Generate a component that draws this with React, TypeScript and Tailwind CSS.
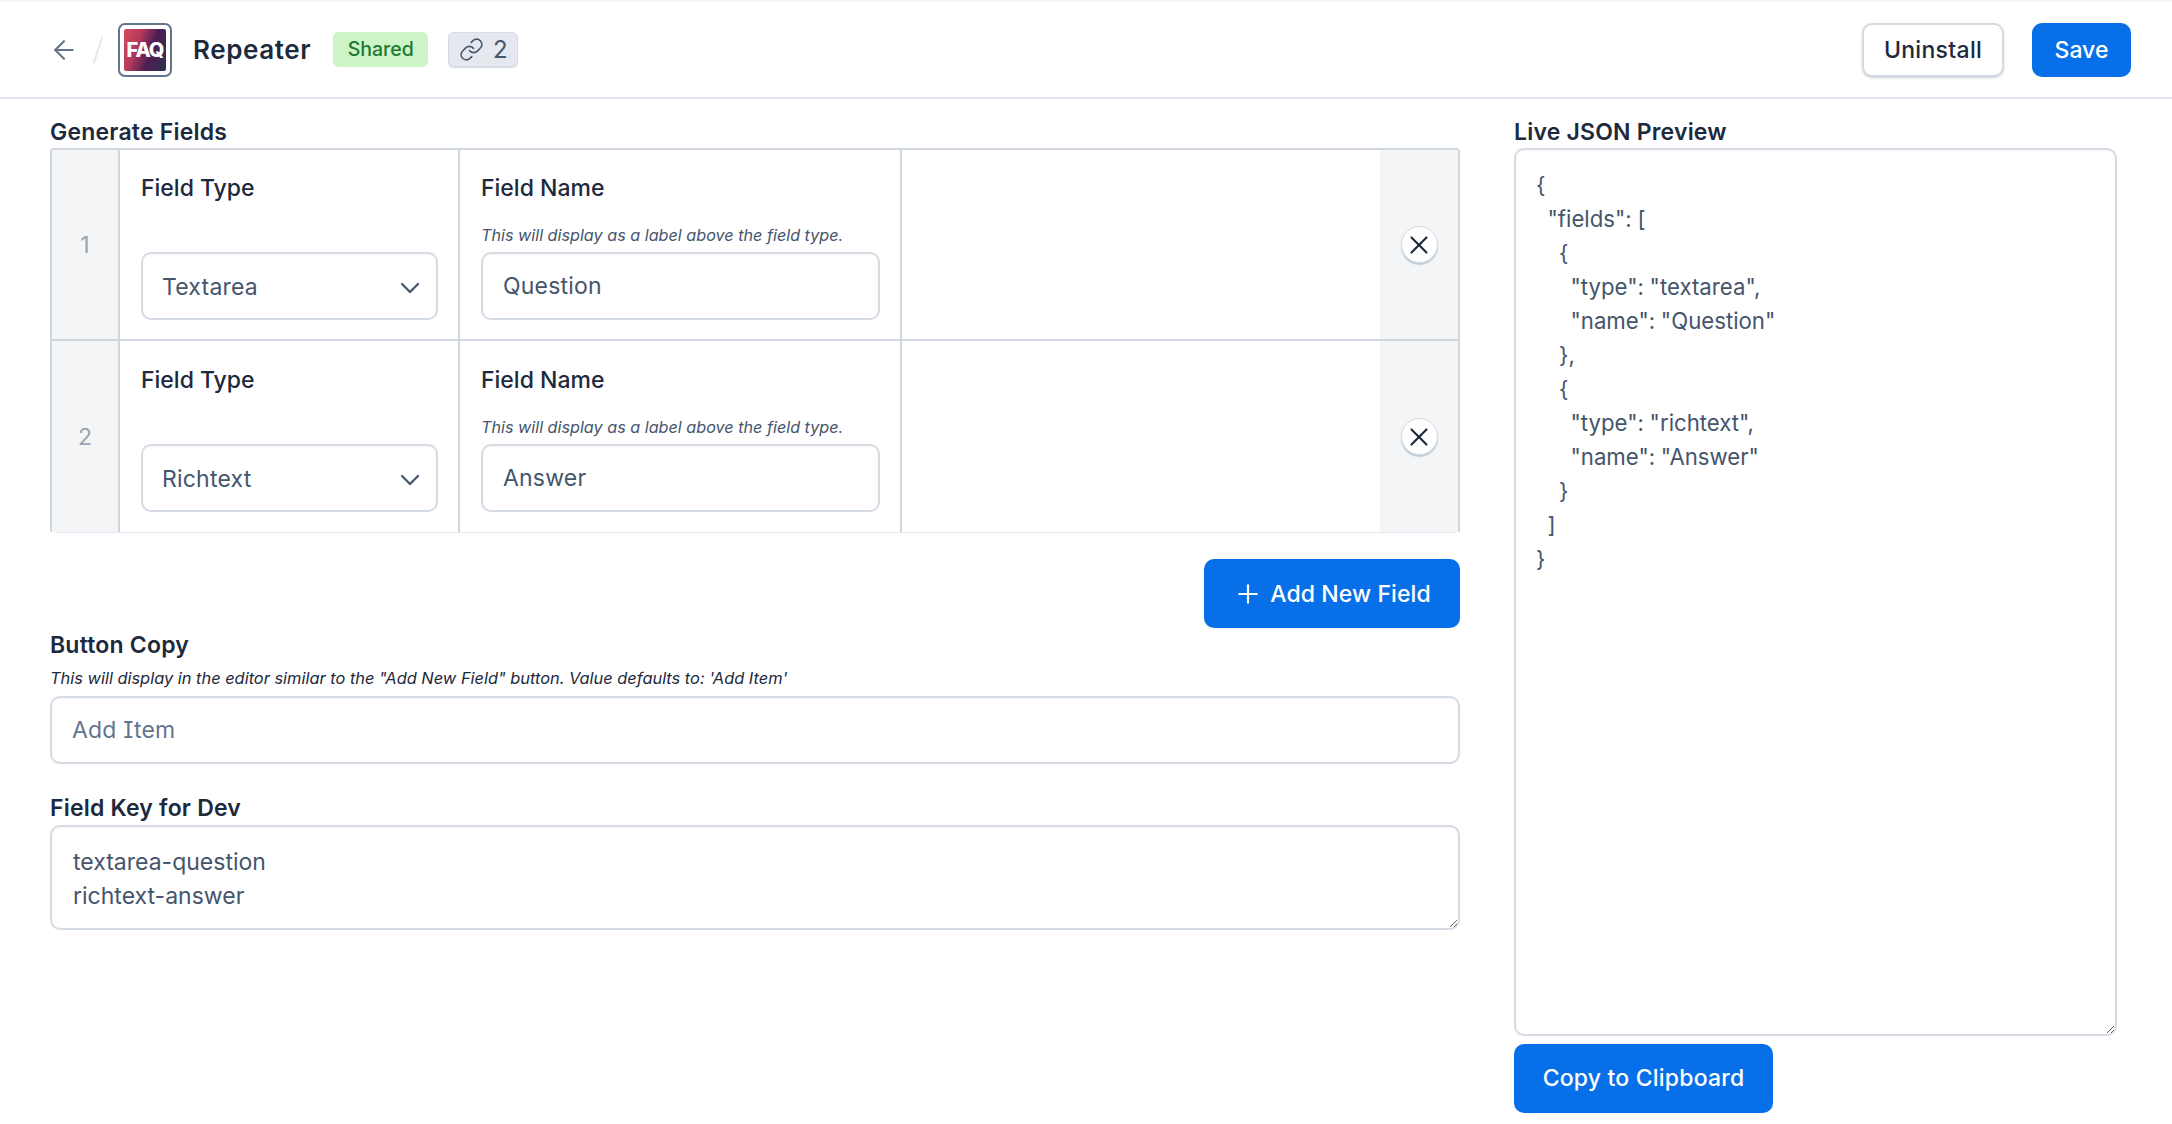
import React from 'react'
import { ArrowLeft, ChevronDown, Link, Plus, X } from 'lucide-react'

const rows = [
  { num: 1, type: 'Textarea', name: 'Question' },
  { num: 2, type: 'Richtext', name: 'Answer' },
]

const json = `{
  "fields": [
    {
      "type": "textarea",
      "name": "Question"
    },
    {
      "type": "richtext",
      "name": "Answer"
    }
  ]
}`

const fieldBox =
  'w-full rounded-[10px] border-2 border-[#d5dbe3] bg-white text-slate-600 shadow-[inset_0_1px_2px_rgba(15,23,42,0.04)] outline-none'

const title = 'text-[23px] font-semibold leading-[30px] tracking-[0.2px] text-slate-800'

const FieldRow = ({ num, type, name }: { num: number; type: string; name: string }) => {
  // second row has no top border of its own, so its padding differs a little
  const cellPad = num === 1 ? 'pb-[19px] pt-[23px]' : 'pb-[20px] pt-[24px]'

  return (
    <div className="flex h-[193px] border-y-2 border-[#cfd6de] last:h-[192px] last:border-b last:border-t-0 last:border-b-[#e2e8f0] first:rounded-t-[4px] last:rounded-b-[8px]">
      <div className="flex w-[70px] shrink-0 items-center justify-center border-x-2 border-[#cfd6de] bg-[#f3f5f6] pt-[2px] text-[23px] text-[#9aa3af]">
        {num}
      </div>
      <div className={`flex w-[340px] shrink-0 flex-col justify-between border-r-2 border-[#cfd6de] pl-[21px] pr-[20px] ${cellPad}`}>
        <div className="text-[23px] font-medium leading-[30px] text-slate-800">Field Type</div>
        <button className={`${fieldBox} flex h-[68px] items-center justify-between pl-[19px] pr-[10px] pt-[3px] text-left text-[23px] tracking-[0.2px]`}>
          {type}
          <ChevronDown className="h-[32px] w-[32px] text-slate-600" strokeWidth={1.7} />
        </button>
      </div>
      <div className={`flex w-[442px] shrink-0 flex-col border-r-2 border-[#cfd6de] pl-[21px] pr-[20px] ${cellPad}`}>
        <div className="text-[23px] font-medium leading-[30px] text-slate-800">Field Name</div>
        <div className="mt-[20px] text-[16.2px] italic leading-[24px] text-slate-600">
          This will display as a label above the field type.
        </div>
        <input className={`${fieldBox} mt-auto h-[68px] px-[20px] text-[23px] tracking-[0.2px]`} defaultValue={name} />
      </div>
      <div className="flex-1" />
      <div className="flex w-[80px] shrink-0 items-center justify-center border-r-2 border-[#cfd6de] bg-[#f3f5f6]">
        <button className="flex h-[37px] w-[37px] items-center justify-center rounded-full border border-[#d5dbe3] bg-white text-slate-800 shadow-[0_2px_1px_rgba(148,163,184,0.5)]">
          <X className="h-[30px] w-[30px]" strokeWidth={1.7} />
        </button>
      </div>
    </div>
  )
}

export default function App() {
  return (
    <div className="min-h-screen overflow-hidden bg-white font-['Inter',sans-serif] text-slate-800">
      <header className="flex h-[99px] items-center justify-between border-y-2 border-b-[#e2e8f0] border-t-[#f4f6f8] pl-[49px] pr-[41px]">
        <div className="flex items-center">
          <ArrowLeft className="h-[30px] w-[30px] text-slate-500" strokeWidth={1.7} />
          <div className="ml-[18px] h-[28px] w-[2px] rotate-[18deg] bg-slate-200" />
          <div className="ml-[19px] flex h-[54px] w-[54px] items-center justify-center rounded-[7px] border-2 border-slate-500 bg-white p-[4px]">
            <div className="flex h-full w-full items-center justify-center overflow-hidden rounded-[2px] bg-[linear-gradient(110deg,#d34a5b_0%,#b53a5d_32%,#4d1d54_62%,#2c3350_100%)] text-[20px] font-extrabold tracking-[-1px] text-white">
              FAQ
            </div>
          </div>
          <div className="ml-[21px] text-[26px] font-semibold tracking-[0.6px] text-slate-800">Repeater</div>
          <div className="ml-[22px] flex h-[35px] w-[95px] items-center justify-center rounded-[6px] bg-[#cef3c6] text-[19.5px] font-medium text-[#1c7a35]">
            Shared
          </div>
          <div className="ml-[20px] flex h-[35px] w-[70px] items-center justify-center gap-[9px] rounded-[6px] border border-[#d5dbe3] bg-[#e5e9ef] text-[24px] text-slate-600 shadow-[0_1px_1px_rgba(148,163,184,0.4)]">
            <Link className="h-[25px] w-[25px]" strokeWidth={1.5} />
            2
          </div>
        </div>
        <div className="flex items-center gap-[28px]">
          <button className="flex h-[54px] w-[142px] items-center justify-center rounded-[10px] border-2 border-[#d5dbe3] bg-white pt-[2px] text-[23px] font-medium tracking-[0.3px] text-slate-800 shadow-[0_1px_2px_rgba(148,163,184,0.5)]">
            Uninstall
          </button>
          <button className="flex h-[54px] w-[99px] items-center justify-center rounded-[10px] bg-[#0770e8] pt-[2px] text-[23px] font-medium text-white">
            Save
          </button>
        </div>
      </header>

      <main className="flex px-[50px]">
        <section className="w-[1410px] shrink-0">
          <div className={`pb-[1px] pt-[18px] ${title}`}>Generate Fields</div>
          <div className="flex flex-col">
            {rows.map((row) => (
              <FieldRow key={row.num} {...row} />
            ))}
          </div>
          <div className="mt-[26px] flex justify-end">
            <button className="flex h-[69px] w-[256px] items-center justify-center gap-[7px] rounded-[10px] bg-[#0770e8] pt-[1px] text-[23px] font-medium tracking-[0.1px] text-white">
              <Plus className="h-[30px] w-[30px]" strokeWidth={1.7} />
              Add New Field
            </button>
          </div>
          <div className={`mt-[2px] ${title}`}>Button Copy</div>
          <div className="mt-[6px] text-[16.4px] italic leading-[24px] text-slate-800">
            This will display in the editor similar to the "Add New Field" button. Value defaults to: 'Add Item'
          </div>
          <input
            className={`${fieldBox} mt-[6px] h-[68px] px-[20px] text-[23px] tracking-[0.2px] [font-feature-settings:'cv08'] placeholder:text-slate-500`}
            placeholder="Add Item"
          />
          <div className={`mt-[29px] ${title}`}>Field Key for Dev</div>
          <textarea
            className={`${fieldBox} mt-[2px] block h-[105px] px-[21px] py-[18px] text-[23px] leading-[34px]`}
            defaultValue={'textarea-question\nrichtext-answer'}
          />
        </section>

        <section className="ml-[54px] w-[603px] shrink-0">
          <div className={`pb-[1px] pt-[18px] ${title}`}>Live JSON Preview</div>
          <textarea
            className={`${fieldBox} block h-[888px] whitespace-pre px-[20px] py-[18px] text-[22.2px] leading-[34px] [word-spacing:-0.5px]`}
            defaultValue={json}
          />
          <button className="mt-[8px] flex h-[69px] w-[259px] items-center justify-center rounded-[10px] bg-[#0770e8] text-[23px] font-medium tracking-[0.2px] text-white">
            Copy to Clipboard
          </button>
        </section>
      </main>
    </div>
  )
}
